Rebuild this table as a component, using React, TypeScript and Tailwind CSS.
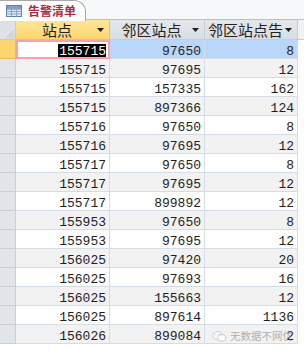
import React from "react";

type Row = { site: string; nbr: string; count: string };

const rows: Row[] = [
  { site: "155715", nbr: "97650", count: "8" },
  { site: "155715", nbr: "97695", count: "12" },
  { site: "155715", nbr: "157335", count: "162" },
  { site: "155715", nbr: "897366", count: "124" },
  { site: "155716", nbr: "97650", count: "8" },
  { site: "155716", nbr: "97695", count: "12" },
  { site: "155717", nbr: "97650", count: "8" },
  { site: "155717", nbr: "97695", count: "12" },
  { site: "155717", nbr: "899892", count: "12" },
  { site: "155953", nbr: "97650", count: "8" },
  { site: "155953", nbr: "97695", count: "12" },
  { site: "156025", nbr: "97420", count: "20" },
  { site: "156025", nbr: "97693", count: "16" },
  { site: "156025", nbr: "155663", count: "12" },
  { site: "156025", nbr: "897614", count: "1136" },
  { site: "156026", nbr: "899084", count: "2" },
];

const cjk = "font-['Noto_Sans_CJK_SC','Noto_Sans',sans-serif]";

const SortArrow = () => (
  <svg width="9" height="6" viewBox="0 0 9 6" className="shrink-0">
    <polygon points="1,1 8,1 4.5,5" fill="#1f1f1f" />
  </svg>
);

const TableIcon = () => (
  <svg width="16" height="12" viewBox="0 0 16 12" className="shrink-0">
    <rect x="0.5" y="0.5" width="15" height="11" fill="#dfe8f5" stroke="#5b7fb5" />
    <rect x="1" y="1" width="14" height="2.5" fill="#7c9bd0" />
    <line x1="0.5" y1="4" x2="15.5" y2="4" stroke="#5b7fb5" />
    <line x1="0.5" y1="6.5" x2="15.5" y2="6.5" stroke="#8aa3cc" />
    <line x1="0.5" y1="9" x2="15.5" y2="9" stroke="#8aa3cc" />
    <line x1="5.5" y1="0.5" x2="5.5" y2="11.5" stroke="#8aa3cc" />
    <line x1="10.5" y1="0.5" x2="10.5" y2="11.5" stroke="#8aa3cc" />
  </svg>
);

const HeaderCell = ({
  label,
  width,
  active,
}: {
  label: string;
  width: string;
  active?: boolean;
}) => (
  <div
    className={`${width} h-full flex items-center border-r border-b ${
      active
        ? "bg-gradient-to-b from-[#fee79a] to-[#fbd66e] border-[#e8c260]"
        : "bg-gradient-to-b from-[#e4e7eb] to-[#d9dee4] border-[#c4ccd6]"
    }`}
  >
    <div
      className={`flex-1 min-w-0 overflow-hidden whitespace-nowrap text-center text-[15px] leading-[18px] pt-[1px] pl-[3px] text-[#222] ${cjk}`}
    >
      {label}
    </div>
    <div className="pr-[4px] pl-[1px] flex items-center">
      <SortArrow />
    </div>
  </div>
);

export default function App() {
  return (
    <div className="relative w-[304px] h-[350px] overflow-hidden bg-white">
      {/* tab strip */}
      <div className="h-[20px] flex bg-[#f7f8f9] border-b border-[#b9c0c9]">
        <div className="relative h-[21px] w-[86px] shrink-0 bg-white border-t border-r border-[#a9a9a9] rounded-tr-[12px] flex items-center pl-[6px] gap-[6px] -mb-px">
          <TableIcon />
          <span className={`text-[12px] font-bold leading-[16px] whitespace-nowrap text-[#b0283f] ${cjk}`}>
            告警清单
          </span>
        </div>
      </div>

      {/* column headers */}
      <div className="h-[20px] flex">
        <div className="w-[16px] h-full bg-[#dde1e6] border-r border-b border-[#c4ccd6] flex items-end justify-end">
          <svg width="14" height="14" viewBox="0 0 14 14">
            <polygon points="13,2 13,13 2,13" fill="#d2d7de" />
            <line x1="13" y1="2" x2="2" y2="13" stroke="#f4f6f8" />
          </svg>
        </div>
        <HeaderCell label="站点" width="w-[94px]" active />
        <HeaderCell label="邻区站点" width="w-[95px]" />
        <HeaderCell label="邻区站点告" width="w-[93px]" />
        <div className="flex-1 h-full bg-[#f0f1f3] border-b border-[#c4ccd6]" />
      </div>

      {/* rows */}
      <div className="flex flex-col font-['Liberation_Mono',monospace] text-[13px] text-[#1e1e1e]">
        {rows.map((r, i) => {
          const selected = i === 0;
          const stripe = i % 2 === 1 ? "bg-[#f2f2f2]" : "bg-white";
          return (
            <div key={i} className="h-[19px] flex">
              <div
                className={`w-[16px] h-full border-r border-b ${
                  selected
                    ? "bg-[#fcd570] border-[#e3bd5c]"
                    : "bg-[#e1e4e9] border-[#c8ced7]"
                }`}
              />
              <div
                className={`w-[94px] h-full border-r border-b border-[#d5dce5] text-right pr-[3px] pt-[4px] leading-[15px] ${
                  selected ? "bg-white outline outline-2 -outline-offset-2 outline-[#f5a3a8]" : stripe
                }`}
              >
                {selected ? (
                  <span className="bg-black text-white pl-px">{r.site}</span>
                ) : (
                  r.site
                )}
              </div>
              <div
                className={`w-[95px] h-full border-r border-b border-[#d5dce5] text-right pr-[3px] pt-[4px] leading-[15px] ${
                  selected ? "bg-[#b8d7fb]" : stripe
                }`}
              >
                {r.nbr}
              </div>
              <div
                className={`w-[93px] h-full border-r border-b border-[#d5dce5] text-right pr-[3px] pt-[4px] leading-[15px] ${
                  selected ? "bg-[#b8d7fb]" : stripe
                }`}
              >
                {r.count}
              </div>
              <div className="flex-1 h-full bg-white" />
            </div>
          );
        })}
      </div>

      {/* watermark */}
      <div className="absolute left-[212px] top-[329px] flex items-center gap-[3px] opacity-75">
        <svg width="15" height="13" viewBox="0 0 16 13" className="shrink-0">
          <ellipse cx="6" cy="5.5" rx="5.2" ry="4.3" fill="white" stroke="#b5b5b5" />
          <ellipse cx="10.5" cy="8" rx="4.3" ry="3.5" fill="white" stroke="#b5b5b5" />
          <circle cx="4.2" cy="4.6" r="0.7" fill="#b5b5b5" />
          <circle cx="7.6" cy="4.6" r="0.7" fill="#b5b5b5" />
        </svg>
        <span className={`text-[10.5px] leading-[14px] whitespace-nowrap text-[#9a9a9a] ${cjk}`}>
          无数据不网优
        </span>
      </div>
    </div>
  );
}
